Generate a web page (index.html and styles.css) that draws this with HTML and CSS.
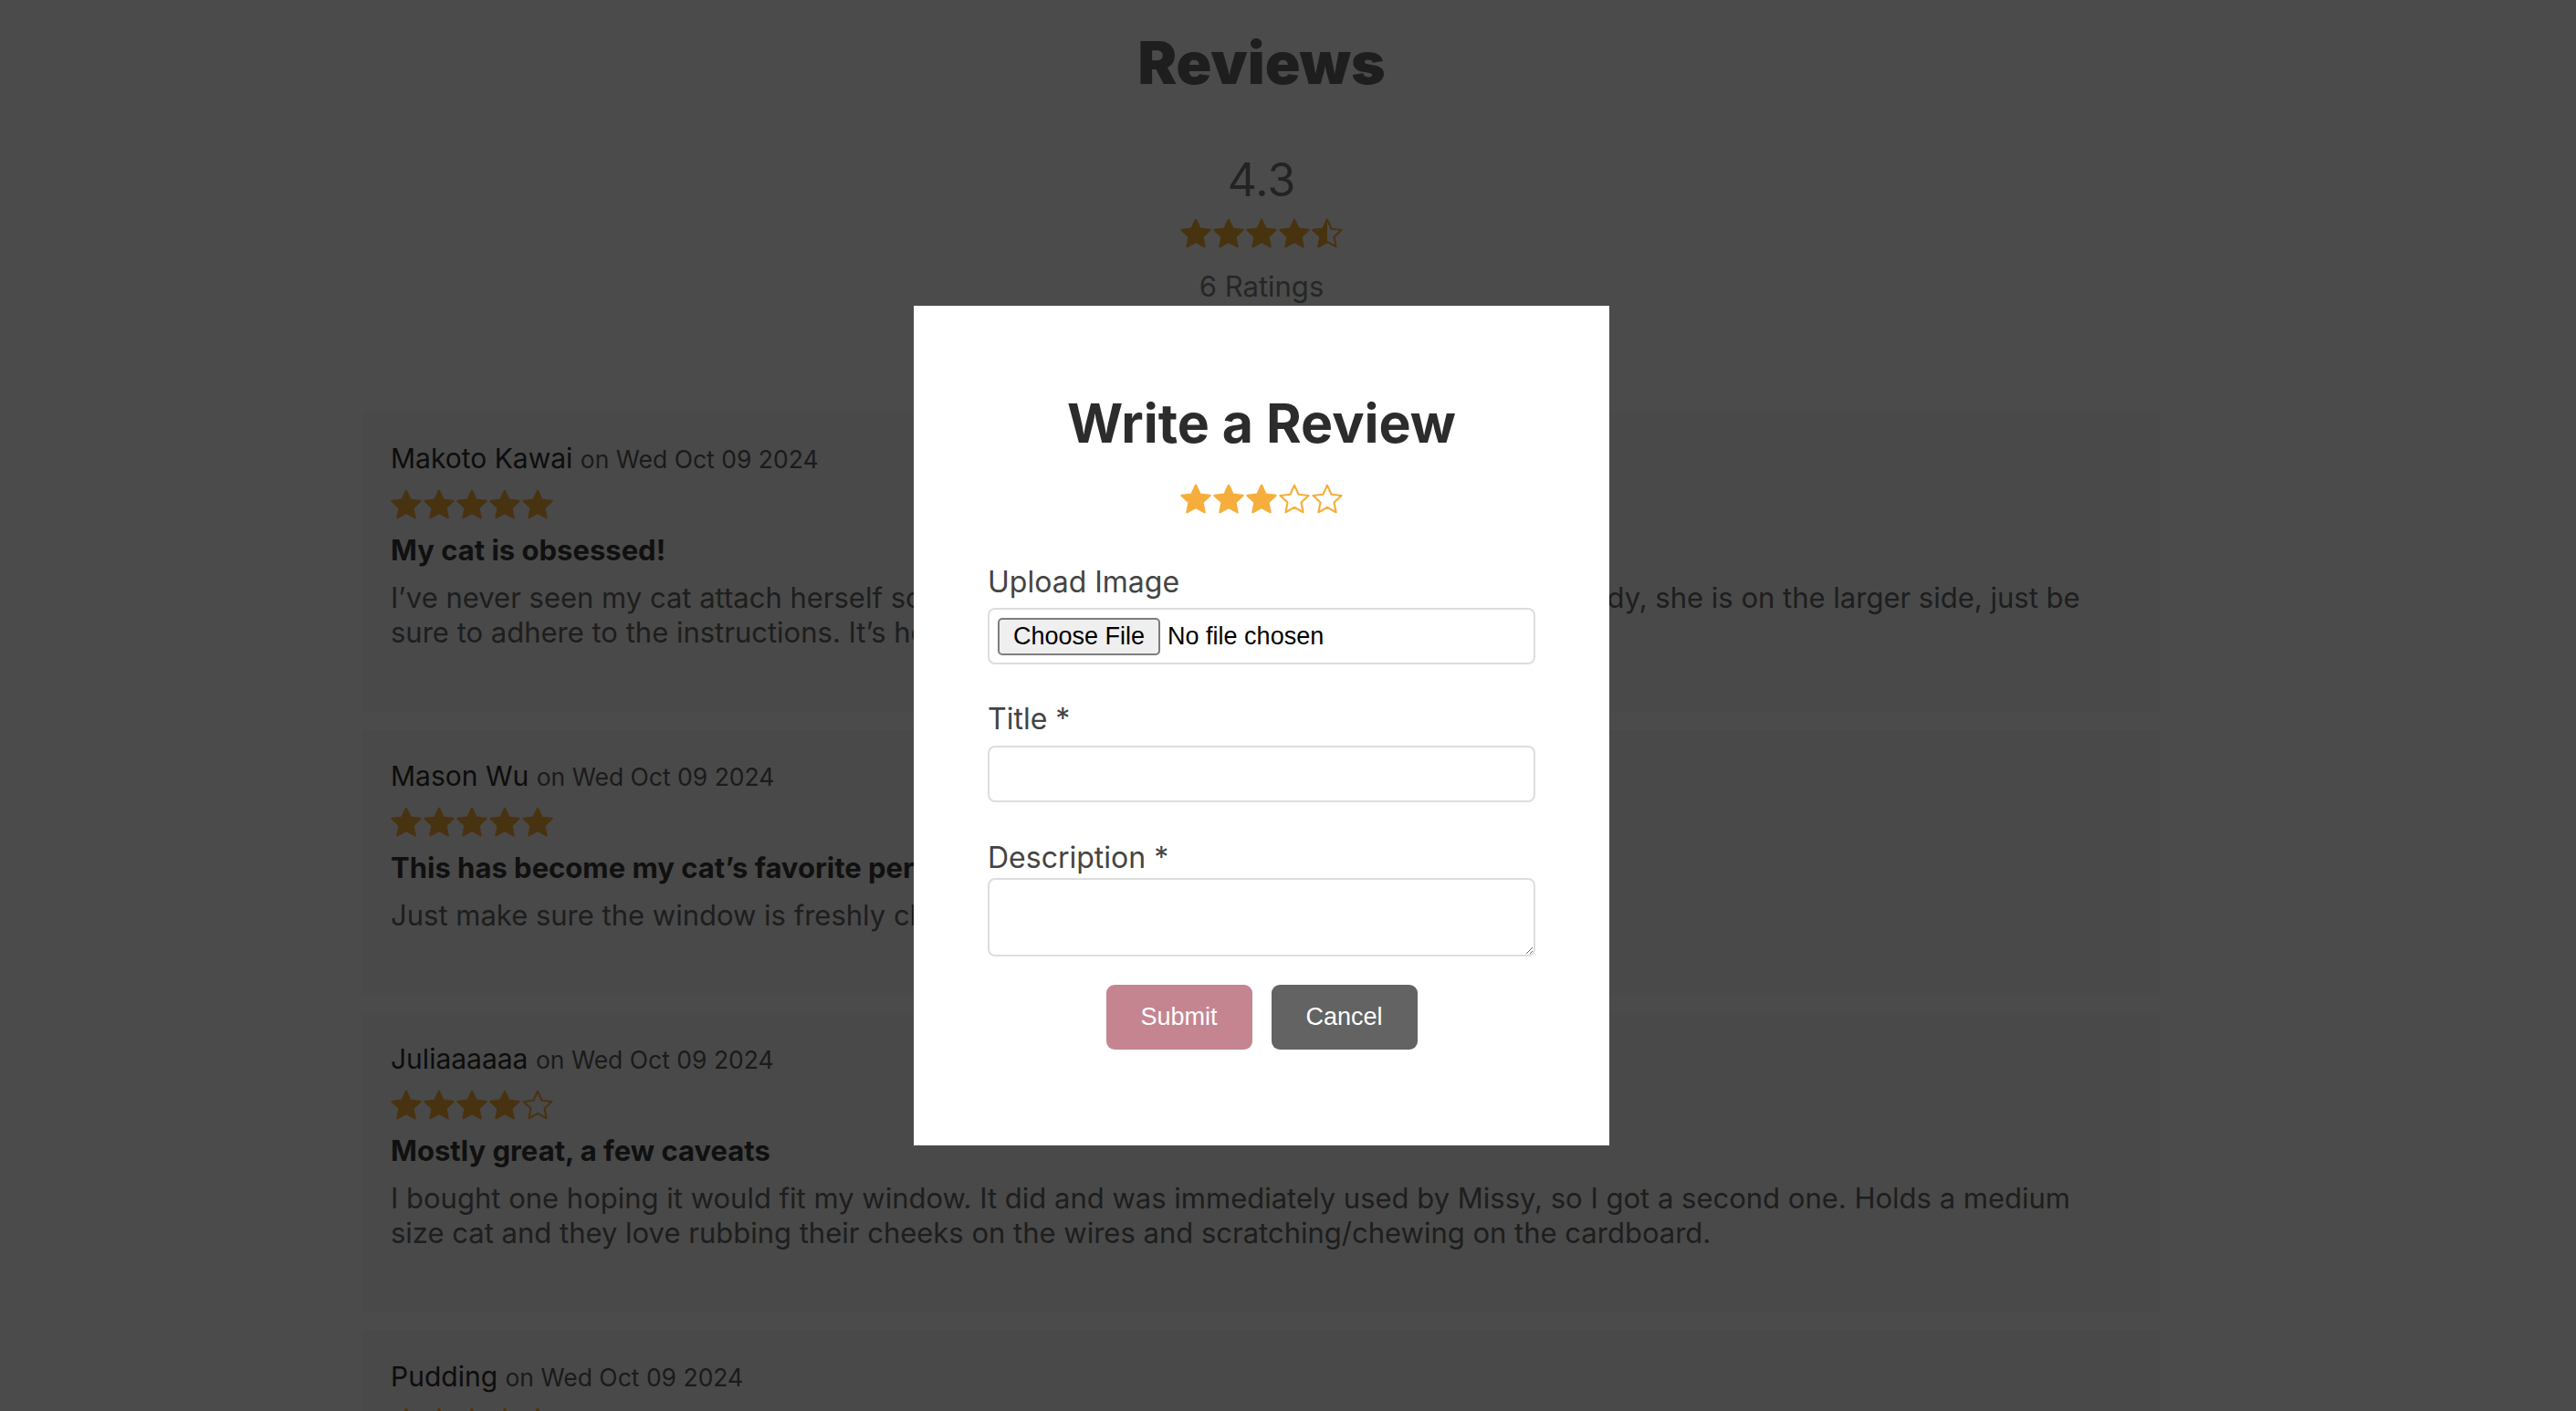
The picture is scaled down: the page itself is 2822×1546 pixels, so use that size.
FILE: index.html
```html
<!DOCTYPE html>
<html lang="en">
<head>
<meta charset="utf-8">
<title>Reviews</title>
<link rel="stylesheet" href="styles.css">
</head>
<body>
<svg class="defs" aria-hidden="true">
  <defs>
    <path id="star-shape" d="M0,-10 L2.821,-3.883 L9.511,-3.090 L4.565,1.483 L5.878,8.090 L0,4.8 L-5.878,8.090 L-4.565,1.483 L-9.511,-3.090 L-2.821,-3.883 Z"/>
    <clipPath id="left-half"><rect x="-12" y="-12" width="12" height="24"/></clipPath>
  </defs>
</svg>

<main class="page">
  <section class="summary">
    <h1 class="page-title">Reviews</h1>
    <div class="avg">4.3</div>
    <div class="stars">
      <svg class="star" viewBox="-10.4 -10.9 20.8 19.9"><use href="#star-shape" class="fill"/></svg>
      <svg class="star" viewBox="-10.4 -10.9 20.8 19.9"><use href="#star-shape" class="fill"/></svg>
      <svg class="star" viewBox="-10.4 -10.9 20.8 19.9"><use href="#star-shape" class="fill"/></svg>
      <svg class="star" viewBox="-10.4 -10.9 20.8 19.9"><use href="#star-shape" class="fill"/></svg>
      <svg class="star" viewBox="-10.4 -10.9 20.8 19.9"><use href="#star-shape" class="line"/><use href="#star-shape" class="fill" clip-path="url(#left-half)"/></svg>
    </div>
    <div class="count">6 Ratings</div>
  </section>

  <section class="review-list">
    <article class="review">
      <div class="review-head">Makoto Kawai <span class="date">on Wed Oct 09 2024</span></div>
      <div class="stars">
        <svg class="star" viewBox="-10.4 -10.9 20.8 19.9"><use href="#star-shape" class="fill"/></svg>
        <svg class="star" viewBox="-10.4 -10.9 20.8 19.9"><use href="#star-shape" class="fill"/></svg>
        <svg class="star" viewBox="-10.4 -10.9 20.8 19.9"><use href="#star-shape" class="fill"/></svg>
        <svg class="star" viewBox="-10.4 -10.9 20.8 19.9"><use href="#star-shape" class="fill"/></svg>
        <svg class="star" viewBox="-10.4 -10.9 20.8 19.9"><use href="#star-shape" class="fill"/></svg>
      </div>
      <h3 class="review-title">My cat is obsessed!</h3>
      <p class="review-body">I’ve never seen my cat attach herself so quickly to anything new. The hammock is very sturdy, she is on the larger side, just be sure to adhere to the instructions. It’s holding up great so far!</p>
    </article>

    <article class="review">
      <div class="review-head">Mason Wu <span class="date">on Wed Oct 09 2024</span></div>
      <div class="stars">
        <svg class="star" viewBox="-10.4 -10.9 20.8 19.9"><use href="#star-shape" class="fill"/></svg>
        <svg class="star" viewBox="-10.4 -10.9 20.8 19.9"><use href="#star-shape" class="fill"/></svg>
        <svg class="star" viewBox="-10.4 -10.9 20.8 19.9"><use href="#star-shape" class="fill"/></svg>
        <svg class="star" viewBox="-10.4 -10.9 20.8 19.9"><use href="#star-shape" class="fill"/></svg>
        <svg class="star" viewBox="-10.4 -10.9 20.8 19.9"><use href="#star-shape" class="fill"/></svg>
      </div>
      <h3 class="review-title">This has become my cat’s favorite perch!</h3>
      <p class="review-body">Just make sure the window is freshly cleaned before you install it.</p>
    </article>

    <article class="review">
      <div class="review-head">Juliaaaaaa <span class="date">on Wed Oct 09 2024</span></div>
      <div class="stars">
        <svg class="star" viewBox="-10.4 -10.9 20.8 19.9"><use href="#star-shape" class="fill"/></svg>
        <svg class="star" viewBox="-10.4 -10.9 20.8 19.9"><use href="#star-shape" class="fill"/></svg>
        <svg class="star" viewBox="-10.4 -10.9 20.8 19.9"><use href="#star-shape" class="fill"/></svg>
        <svg class="star" viewBox="-10.4 -10.9 20.8 19.9"><use href="#star-shape" class="fill"/></svg>
        <svg class="star" viewBox="-10.4 -10.9 20.8 19.9"><use href="#star-shape" class="line"/></svg>
      </div>
      <h3 class="review-title">Mostly great, a few caveats</h3>
      <p class="review-body">I bought one hoping it would fit my window. It did and was immediately used by Missy, so I got a second one. Holds a medium size cat and they love rubbing their cheeks on the wires and scratching/chewing on the cardboard.</p>
    </article>

    <article class="review">
      <div class="review-head">Pudding <span class="date">on Wed Oct 09 2024</span></div>
      <div class="stars">
        <svg class="star" viewBox="-10.4 -10.9 20.8 19.9"><use href="#star-shape" class="fill"/></svg>
        <svg class="star" viewBox="-10.4 -10.9 20.8 19.9"><use href="#star-shape" class="fill"/></svg>
        <svg class="star" viewBox="-10.4 -10.9 20.8 19.9"><use href="#star-shape" class="fill"/></svg>
        <svg class="star" viewBox="-10.4 -10.9 20.8 19.9"><use href="#star-shape" class="fill"/></svg>
        <svg class="star" viewBox="-10.4 -10.9 20.8 19.9"><use href="#star-shape" class="line"/></svg>
      </div>
      <h3 class="review-title">Great window seat</h3>
      <p class="review-body">Easy to set up and my cat naps in it every afternoon.</p>
    </article>
  </section>
</main>

<div class="overlay">
  <div class="overlay-inner">
    <form class="modal">
      <h2 class="modal-title">Write a Review</h2>
      <div class="stars">
        <svg class="star" viewBox="-10.4 -10.9 20.8 19.9"><use href="#star-shape" class="fill"/></svg>
        <svg class="star" viewBox="-10.4 -10.9 20.8 19.9"><use href="#star-shape" class="fill"/></svg>
        <svg class="star" viewBox="-10.4 -10.9 20.8 19.9"><use href="#star-shape" class="fill"/></svg>
        <svg class="star" viewBox="-10.4 -10.9 20.8 19.9"><use href="#star-shape" class="line"/></svg>
        <svg class="star" viewBox="-10.4 -10.9 20.8 19.9"><use href="#star-shape" class="line"/></svg>
      </div>
      <label class="field-label upload-label" for="image">Upload Image</label>
      <div class="file-field"><input class="file-input" id="image" type="file"></div>
      <label class="field-label title-label" for="title">Title *</label>
      <input class="text-input" id="title" type="text">
      <label class="field-label desc-label" for="desc">Description *</label>
      <textarea class="text-area" id="desc"></textarea>
      <div class="actions">
        <button type="button" class="btn btn-submit">Submit</button>
        <button type="button" class="btn btn-cancel">Cancel</button>
      </div>
    </form>
  </div>
</div>
</body>
</html>
```

FILE: styles.css
```css
* { box-sizing: border-box; }

html, body {
  margin: 0;
  overflow: hidden;
}

body {
  background: #ffffff;
  font-family: Inter, "Noto Sans", sans-serif;
  color: #333;
}

.defs {
  position: absolute;
  width: 0;
  height: 0;
}

.page {
  width: 2764px;
  padding-top: 30px;
}

.summary {
  display: flex;
  flex-direction: column;
  align-items: center;
}

.page-title {
  margin: 0;
  font-size: 64px;
  font-weight: 900;
  line-height: 77px;
  color: #666;
}

.avg {
  margin-top: 60px;
  font-size: 50px;
  line-height: 60px;
  color: #777;
}

.summary .stars { margin-top: 12px; }

.count {
  margin-top: 23px;
  font-size: 31px;
  line-height: 37px;
  color: #818181;
}

.stars {
  display: flex;
  gap: 2px;
}

.star {
  width: 34px;
  height: 33px;
  display: block;
}

.star .fill {
  fill: #f5ae3c;
  stroke: #f5ae3c;
  stroke-width: 1.4;
  stroke-linejoin: round;
}

.star .line {
  fill: none;
  stroke: #f5ae3c;
  stroke-width: 1.3;
  stroke-linejoin: round;
}

.review-list {
  width: 1970px;
  margin: 120px auto 0;
  display: flex;
  flex-direction: column;
  gap: 20px;
}

.review {
  background: #f8f8f8;
  padding: 32px 54px 68px 31px;
}

.review-head {
  font-size: 30px;
  line-height: 36px;
  color: #2c2c2c;
}

.date {
  font-size: 26.5px;
  color: #5c5c5c;
}

.review .stars { margin-top: 15px; }

.review-title {
  margin: 16px 0 0;
  font-size: 31px;
  line-height: 36px;
  font-weight: 700;
  color: #363636;
}

.review-body {
  margin: 15px 0 0;
  font-size: 31px;
  line-height: 38px;
  color: #666;
}

/* Modal */
.overlay {
  position: fixed;
  inset: 0;
  background: rgba(0, 0, 0, 0.706);
}

.overlay-inner {
  width: 2764px;
  display: flex;
  justify-content: center;
  padding-top: 335px;
}

.modal {
  width: 762px;
  background: #fff;
  padding: 93px 81px 105px;
  display: flex;
  flex-direction: column;
}

.modal-title {
  margin: 0;
  text-align: center;
  font-size: 59px;
  line-height: 72px;
  font-weight: 700;
  color: #2c2c2c;
}

.modal .stars {
  justify-content: center;
  margin-top: 30px;
}

.field-label {
  display: block;
  font-size: 32px;
  line-height: 38px;
  color: #444;
}

.upload-label { margin-top: 56px; }
.title-label { margin-top: 41px; }
.desc-label { margin-top: 42px; }

.file-field {
  margin-top: 9px;
  height: 62px;
  border: 2px solid #dddddd;
  border-radius: 8px;
  padding: 0 9px;
  display: flex;
  align-items: center;
}

.file-input {
  width: 100%;
  font: 27px "Liberation Sans", Arial, sans-serif;
  color: #000;
}

.file-input::file-selector-button {
  height: 41px;
  padding: 0 15px;
  margin-right: 8px;
  background: #efefef;
  border: 2px solid #7d7d7d;
  border-radius: 5px;
  font: 27px "Liberation Sans", Arial, sans-serif;
  color: #000;
}

.text-input {
  display: block;
  width: 100%;
  height: 62px;
  margin-top: 10px;
  border: 2px solid #dddddd;
  border-radius: 8px;
  padding: 0 12px;
  font: 27px "Liberation Sans", Arial, sans-serif;
}

.text-area {
  display: block;
  width: 100%;
  height: 86px;
  margin-top: 3px;
  border: 2px solid #dddddd;
  border-radius: 8px;
  padding: 8px 12px;
  font: 27px "Liberation Sans", Arial, sans-serif;
}

.actions {
  margin-top: 31px;
  display: flex;
  justify-content: center;
  gap: 21px;
}

.btn {
  width: 160px;
  height: 71px;
  border: none;
  border-radius: 9px;
  color: #fff;
  font: 27px "Liberation Sans", Arial, sans-serif;
}

.btn-submit { background: #c48591; }
.btn-cancel { background: #636363; }
```
